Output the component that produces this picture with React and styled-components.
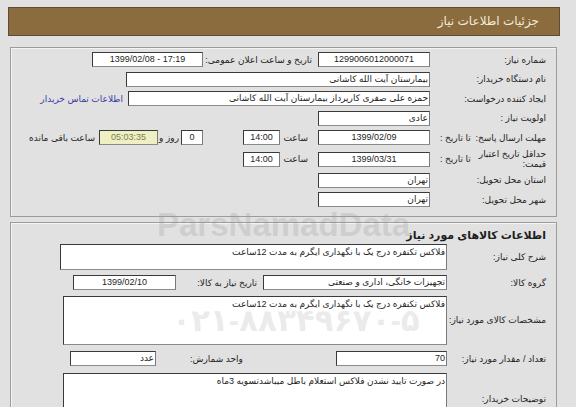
import React from "react";
import styled, { createGlobalStyle } from "styled-components";

const Global = createGlobalStyle`
  html, body { margin: 0; padding: 0; background: #e1e1e1; }
  body { font-family: "Liberation Sans", "DejaVu Sans", sans-serif; }
`;

const Page = styled.div`
  position: relative;
  width: 576px;
  height: 407px;
  overflow: hidden;
  box-sizing: border-box;
  padding: 7px 16px 0 8px;
  direction: rtl;
  background: #e1e1e1;
`;

const Header = styled.div`
  height: 29px;
  box-sizing: border-box;
  background: #8b6c3f;
  border: 1px solid #5e4b33;
  color: #f3ead8;
  font-size: 12px;
  line-height: 27px;
  padding-right: 20px;
`;

const Panel = styled.div`
  margin: ${(p) => p.$mt}px 3px 0 2px;
  border: 1px solid #9c9c9c;
  box-shadow: inset 1px 1px 0 #f4f4f4;
  padding: ${(p) => p.$pt}px 0 ${(p) => p.$pb}px 0;
  display: flex;
  flex-direction: column;
`;

const Row = styled.div`
  display: flex;
  align-items: center;
  height: ${(p) => p.$h}px;
  margin-top: ${(p) => p.$mt || 0}px;
  flex: none;
`;

const Label = styled.div`
  width: ${(p) => p.$w}px;
  flex: none;
  box-sizing: border-box;
  padding: 0 10px 0 10px;
  font-size: 9px;
  color: #1e1e1e;
  display: flex;
  align-items: center;
  line-height: 10px;
  white-space: nowrap;
`;

const Sub = styled.span`
  margin-right: auto;
`;

const Text = styled.div`
  width: ${(p) => (p.$w ? `${p.$w}px` : "auto")};
  flex: none;
  box-sizing: border-box;
  font-size: 9px;
  color: #1e1e1e;
  white-space: nowrap;
  text-align: ${(p) => p.$align || "right"};
  padding-right: ${(p) => p.$pr || 0}px;
  padding-left: ${(p) => p.$pl || 0}px;
`;

const Field = styled.div`
  width: ${(p) => p.$w}px;
  height: ${(p) => p.$h || 15}px;
  flex: none;
  box-sizing: border-box;
  margin-left: ${(p) => p.$ml || 0}px;
  background: ${(p) => (p.$hi ? "#efefc4" : "#fff")};
  color: ${(p) => (p.$hi ? "#7d7d52" : "#1e1e1e")};
  border: 1px solid #3a3a3a;
  border-right-color: #7a7a7a;
  border-bottom-color: #8a8a8a;
  font-size: 9px;
  line-height: 13px;
  padding: ${(p) => (p.$h ? "1px 1px" : "0 1px")};
  text-align: ${(p) => p.$align || "right"};
  white-space: nowrap;
  overflow: hidden;
`;

const Ltr = styled.span`
  direction: ltr;
  unicode-bidi: isolate;
  display: inline-block;
`;

const Link = styled.a`
  font-size: 9px;
  color: #3b3ba3;
  text-decoration: none;
  white-space: nowrap;
`;

const Title = styled.div`
  font-size: 11px;
  font-weight: bold;
  color: #1e1e1e;
  padding-right: 10px;
  height: 13px;
  line-height: 13px;
`;

const Mark = styled.div`
  position: absolute;
  left: ${(p) => p.$x}px;
  top: ${(p) => p.$y}px;
  font-size: ${(p) => p.$size}px;
  line-height: 1;
  font-weight: bold;
  color: rgba(150, 150, 150, ${(p) => p.$a});
  white-space: nowrap;
  direction: ltr;
  pointer-events: none;
  font-family: "Liberation Sans", "DejaVu Sans", sans-serif;
`;

export default function App() {
  return (
    <Page>
      <Global />
      <Header>جزئیات اطلاعات نیاز</Header>

      <Panel $mt={11} $pt={2} $pb={6}>
        <Row $h={19.5}>
          <Label $w={126}>شماره نیاز:</Label>
          <Field $w={112} $align="center">1299006012000071</Field>
          <Text $w={115} $pr={6}>تاریخ و ساعت اعلان عمومی:</Text>
          <Field $w={111} $align="center"><Ltr>1399/02/08 - 17:19</Ltr></Field>
        </Row>
        <Row $h={19.5}>
          <Label $w={126}>نام دستگاه خریدار:</Label>
          <Field $w={304}>بیمارستان آیت الله کاشانی</Field>
        </Row>
        <Row $h={19.5}>
          <Label $w={126}>ایجاد کننده درخواست:</Label>
          <Field $w={302} $ml={5}>حمزه علی صفری کارپرداز بیمارستان آیت الله کاشانی</Field>
          <Link href="#">اطلاعات تماس خریدار</Link>
        </Row>
        <Row $h={19.5}>
          <Label $w={126}>اولویت نیاز :</Label>
          <Field $w={112}>عادی</Field>
        </Row>
        <Row $h={19.5}>
          <Label $w={126}>
            مهلت ارسال پاسخ:<Sub>تا تاریخ :</Sub>
          </Label>
          <Field $w={112} $align="center">1399/02/09</Field>
          <Text $w={38} $pr={10}>ساعت</Text>
          <Field $w={37} $ml={40} $align="center">14:00</Field>
          <Field $w={22} $align="center">0</Field>
          <Text $w={23} $pr={2}>روز و</Text>
          <Field $w={59} $hi $align="center">05:03:35</Field>
          <Text $pr={4}>ساعت باقی مانده</Text>
        </Row>
        <Row $h={23}>
          <Label $w={126}>
            <span>حداقل تاریخ اعتبار<br />قیمت:</span>
            <Sub>تا تاریخ :</Sub>
          </Label>
          <Field $w={112} $align="center">1399/03/31</Field>
          <Text $w={38} $pr={10}>ساعت</Text>
          <Field $w={37} $align="center">14:00</Field>
        </Row>
        <Row $h={19.5}>
          <Label $w={126}>استان محل تحویل:</Label>
          <Field $w={112}>تهران</Field>
        </Row>
        <Row $h={19.5}>
          <Label $w={126}>شهر محل تحویل:</Label>
          <Field $w={112}>تهران</Field>
        </Row>
      </Panel>

      <Panel $mt={5} $pt={6} $pb={0}>
        <Title>اطلاعات کالاهای مورد نیاز</Title>
        <Row $h={26} $mt={2}>
          <Label $w={109}>شرح کلی نیاز:</Label>
          <Field $w={387} $h={26}>فلاکس تکنفره درج یک با نگهداری ایگرم به مدت 12ساعت</Field>
        </Row>
        <Row $h={14} $mt={6}>
          <Label $w={109}>گروه کالا:</Label>
          <Field $w={184}>تجهیزات خانگی، اداری و صنعتی</Field>
          <Text $w={87} $pr={6}>تاریخ نیاز به کالا:</Text>
          <Field $w={103} $align="center">1399/02/10</Field>
        </Row>
        <Row $h={49} $mt={6}>
          <Label $w={109}>مشخصات کالای مورد نیاز:</Label>
          <Field $w={384} $h={49}>فلاکس تکنفره درج یک با نگهداری ایگرم به مدت 12ساعت</Field>
        </Row>
        <Row $h={14} $mt={7}>
          <Label $w={109}>تعداد / مقدار مورد نیاز:</Label>
          <Field $w={111}>70</Field>
          <Text $w={180} $align="left" $pl={34}>واحد شمارش:</Text>
          <Field $w={86}>عدد</Field>
        </Row>
        <Row $h={53} $mt={7}>
          <Label $w={109}>توضیحات خریدار:</Label>
          <Field $w={384} $h={53}>در صورت تایید نشدن فلاکس استعلام باطل میباشدتسویه 3ماه</Field>
        </Row>
      </Panel>

      <Mark $x={157} $y={208} $size={33} $a={0.26}>ParsNamadData</Mark>
      <Mark $x={172} $y={305} $size={31} $a={0.2}>۰۲۱-۸۸۳۴۹۶۷۰-۵</Mark>
    </Page>
  );
}
